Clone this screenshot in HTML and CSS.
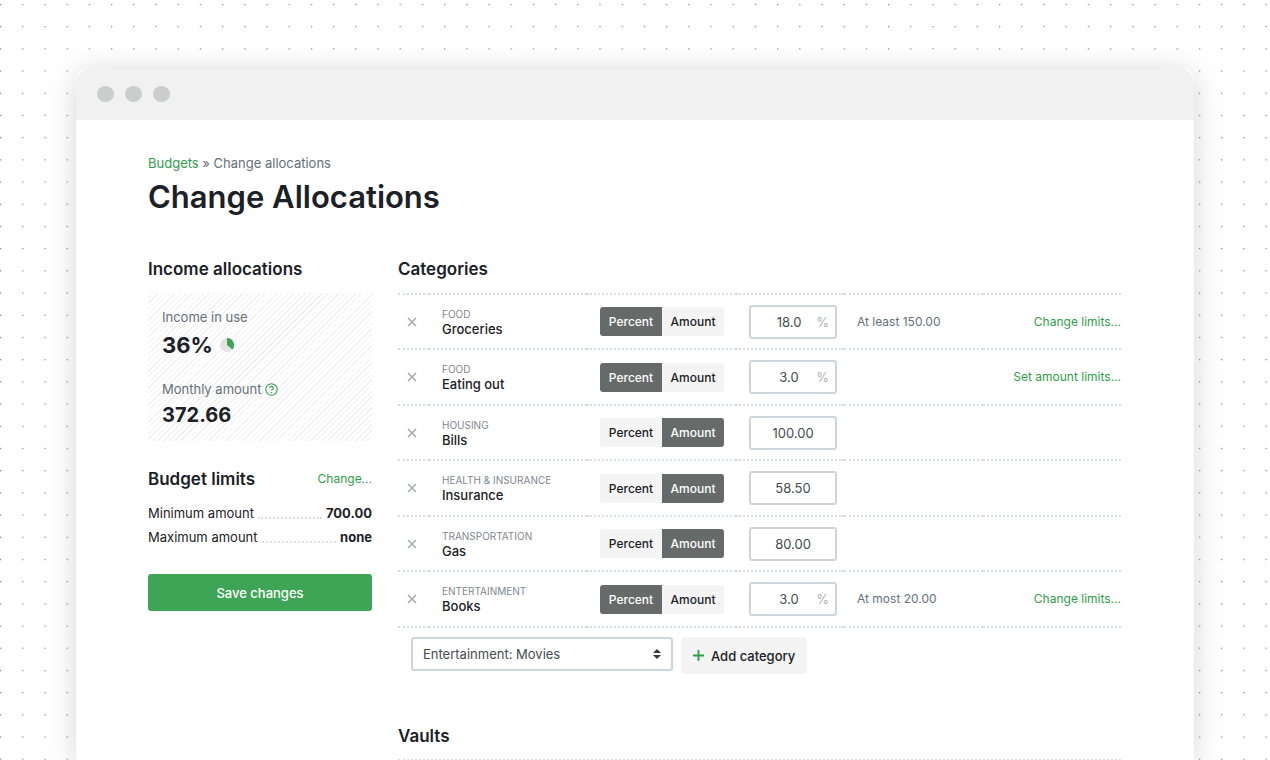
FILE: index.html
```
<!DOCTYPE html>
<html lang="en">

<head>
    <meta charset="UTF-8" />
    <title>Change Allocations</title>
    <link rel="stylesheet" href="styles.css">
</head>
<body>
    <div class="window">
        <div class="titlebar">
            <span class="dot"></span>
            <span class="dot"></span>
            <span class="dot"></span>
        </div>

        <main class="page">
            <nav class="breadcrumb"><a href="#">Budgets</a> » Change allocations</nav>
            <h1>Change Allocations</h1>

            <div class="columns">
                <!-- sidebar -->
                <aside class="sidebar">
                    <h2>Income allocations</h2>
                    <div class="summary">
                        <div class="label">Income in use</div>
                        <div class="value value-large">
                            36%
                            <svg class="pie" viewBox="0 0 28 28" aria-hidden="true">
                                <circle cx="14" cy="14" r="14" fill="#e2e4e4" />
                                <path d="M14 14V0A14 14 0 0 1 24.8 22.9Z" fill="#3fa556" />
                            </svg>
                        </div>
                        <div class="label label-second">
                            Monthly amount
                            <svg class="help" viewBox="0 0 24 24" aria-hidden="true">
                                <circle cx="12" cy="12" r="10.5" />
                                <path d="M8.6 9.4a3.4 3.4 0 0 1 6.8 .6c0 2.2-3.4 2.4-3.4 4.4M12 16.6v2.2" />
                            </svg>
                        </div>
                        <div class="value">372.66</div>
                    </div>

                    <div class="limits-head">
                        <h2>Budget limits</h2>
                        <a href="#">Change...</a>
                    </div>
                    <dl class="limits">
                        <div><dt>Minimum amount</dt><dd>700.00</dd></div>
                        <div><dt>Maximum amount</dt><dd>none</dd></div>
                    </dl>

                    <button class="save" type="button">Save changes</button>
                </aside>

                <!-- categories -->
                <section class="content">
                    <h2>Categories</h2>
                    <table class="allocations">
                        <colgroup>
                            <col class="col-remove">
                            <col class="col-name">
                            <col class="col-type">
                            <col class="col-value">
                            <col>
                            <col>
                        </colgroup>
                        <tbody>
                            <tr>
                                <td><button class="remove" type="button" aria-label="Remove Groceries"><svg viewBox="0 0 10 10"><path d="M1 1l8 8M9 1l-8 8" /></svg></button></td>
                                <td><div class="group">Food</div><div class="name">Groceries</div></td>
                                <td>
                                    <div class="toggle">
                                        <label><input type="radio" name="t1" checked><span>Percent</span></label>
                                        <label><input type="radio" name="t1"><span>Amount</span></label>
                                    </div>
                                </td>
                                <td><label class="field percent"><input type="text" value="18.0" aria-label="Groceries percent"><span>%</span></label></td>
                                <td class="note">At least 150.00</td>
                                <td class="action"><a href="#">Change limits...</a></td>
                            </tr>
                            <tr>
                                <td><button class="remove" type="button" aria-label="Remove Eating out"><svg viewBox="0 0 10 10"><path d="M1 1l8 8M9 1l-8 8" /></svg></button></td>
                                <td><div class="group">Food</div><div class="name">Eating out</div></td>
                                <td>
                                    <div class="toggle">
                                        <label><input type="radio" name="t2" checked><span>Percent</span></label>
                                        <label><input type="radio" name="t2"><span>Amount</span></label>
                                    </div>
                                </td>
                                <td><label class="field percent"><input type="text" value="3.0" aria-label="Eating out percent"><span>%</span></label></td>
                                <td class="note"></td>
                                <td class="action"><a href="#">Set amount limits...</a></td>
                            </tr>
                            <tr>
                                <td><button class="remove" type="button" aria-label="Remove Bills"><svg viewBox="0 0 10 10"><path d="M1 1l8 8M9 1l-8 8" /></svg></button></td>
                                <td><div class="group">Housing</div><div class="name">Bills</div></td>
                                <td>
                                    <div class="toggle">
                                        <label><input type="radio" name="t3"><span>Percent</span></label>
                                        <label><input type="radio" name="t3" checked><span>Amount</span></label>
                                    </div>
                                </td>
                                <td><label class="field"><input type="text" value="100.00" aria-label="Bills amount"></label></td>
                                <td class="note"></td>
                                <td class="action"></td>
                            </tr>
                            <tr>
                                <td><button class="remove" type="button" aria-label="Remove Insurance"><svg viewBox="0 0 10 10"><path d="M1 1l8 8M9 1l-8 8" /></svg></button></td>
                                <td><div class="group">Health &amp; Insurance</div><div class="name">Insurance</div></td>
                                <td>
                                    <div class="toggle">
                                        <label><input type="radio" name="t4"><span>Percent</span></label>
                                        <label><input type="radio" name="t4" checked><span>Amount</span></label>
                                    </div>
                                </td>
                                <td><label class="field"><input type="text" value="58.50" aria-label="Insurance amount"></label></td>
                                <td class="note"></td>
                                <td class="action"></td>
                            </tr>
                            <tr>
                                <td><button class="remove" type="button" aria-label="Remove Gas"><svg viewBox="0 0 10 10"><path d="M1 1l8 8M9 1l-8 8" /></svg></button></td>
                                <td><div class="group">Transportation</div><div class="name">Gas</div></td>
                                <td>
                                    <div class="toggle">
                                        <label><input type="radio" name="t5"><span>Percent</span></label>
                                        <label><input type="radio" name="t5" checked><span>Amount</span></label>
                                    </div>
                                </td>
                                <td><label class="field"><input type="text" value="80.00" aria-label="Gas amount"></label></td>
                                <td class="note"></td>
                                <td class="action"></td>
                            </tr>
                            <tr>
                                <td><button class="remove" type="button" aria-label="Remove Books"><svg viewBox="0 0 10 10"><path d="M1 1l8 8M9 1l-8 8" /></svg></button></td>
                                <td><div class="group">Entertainment</div><div class="name">Books</div></td>
                                <td>
                                    <div class="toggle">
                                        <label><input type="radio" name="t6" checked><span>Percent</span></label>
                                        <label><input type="radio" name="t6"><span>Amount</span></label>
                                    </div>
                                </td>
                                <td><label class="field percent"><input type="text" value="3.0" aria-label="Books percent"><span>%</span></label></td>
                                <td class="note">At most 20.00</td>
                                <td class="action"><a href="#">Change limits...</a></td>
                            </tr>
                        </tbody>
                    </table>

                    <div class="add-row">
                        <select class="category-select" aria-label="Category">
                            <option>Entertainment: Movies</option>
                        </select>
                        <button class="add" type="button">
                            <svg viewBox="0 0 12 12" aria-hidden="true"><path d="M6 0v12M0 6h12" /></svg>
                            Add category
                        </button>
                    </div>

                    <h2>Vaults</h2>
                    <div class="vaults"></div>
                </section>
            </div>
        </main>
    </div>
</body>

</html>
```
FILE: styles.css
```
*{
    box-sizing: border-box;
    margin: 0;
    padding: 0;
}

body{
    min-height: 100vh;
    padding: 68px 76px 0;
    font-family: Inter, "Liberation Sans", sans-serif;
    font-size: 13px;
    line-height: 20px;
    color: #1b2126;
    background-color: #fff;
    /* dotted paper, five dots per tile */
    background-image: url("data:image/svg+xml,%3Csvg xmlns='http://www.w3.org/2000/svg' width='111' height='111' viewBox='0 0 1110 1110'%3E%3Cpattern id='d' width='222' height='222' patternUnits='userSpaceOnUse'%3E%3Crect x='0' y='38' width='13' height='13' fill='%237592a5'/%3E%3C/pattern%3E%3Crect width='1110' height='1110' fill='url(%23d)'/%3E%3C/svg%3E");
}

a{
    color: #2f9e48;
    text-decoration: none;
}

h1{
    font-size: 31px;
    font-weight: 600;
    line-height: 40px;
}

h2{
    font-size: 17px;
    font-weight: 600;
    line-height: 24px;
}

input, select, button{
    font: inherit;
    color: inherit;
}

button{
    border: 0;
    cursor: pointer;
}

/* window frame */
.window{
    min-height: calc(100vh - 68px);
    background-color: #fff;
    border-radius: 12px 12px 0 0;
    box-shadow: 0 4px 30px rgba(0, 0, 0, 0.17);
}

.titlebar{
    display: flex;
    align-items: center;
    gap: 11px;
    height: 52px;
    padding: 0 21px;
    background-color: #f1f1f1;
    border-radius: 15px 15px 0 0;
}

.dot{
    width: 17px;
    height: 16px;
    border-radius: 50%;
    background-color: #cbcdcc;
}

.page{
    padding: 33px 73px 0 72px;
}

.breadcrumb{
    color: #65707a;
    margin-bottom: 4px;
}

.columns{
    display: grid;
    grid-template-columns: 224px 1fr;
    column-gap: 26px;
    margin-top: 40px;
}

/* sidebar */
.summary{
    margin-top: 12px;
    padding: 14px 14px 10px;
    background: repeating-linear-gradient(135deg, #fff 0, #fff 3px, #f1f1f1 3px, #f1f1f1 4px);
}

.label{
    color: #65707a;
}

.label-second{
    display: flex;
    align-items: center;
    gap: 4px;
    margin-top: 16px;
}

.value{
    font-size: 20px;
    font-weight: 700;
    line-height: 32px;
}

.value-large{
    display: flex;
    align-items: center;
    gap: 7px;
    font-size: 22px;
    line-height: 36px;
}

.pie{
    width: 14px;
    height: 14px;
}

.help{
    width: 13px;
    height: 13px;
    fill: none;
    stroke: #2f9e48;
    stroke-width: 2;
}

.limits-head{
    display: flex;
    justify-content: space-between;
    align-items: center;
    margin-top: 26px;
}

.limits-head a, .note, .action{
    font-size: 12px;
}

.limits{
    margin-top: 10px;
}

.limits div{
    display: flex;
    gap: 4px;
    line-height: 24px;
}

/* leader between name and value */
.limits dt{
    flex: 1;
    display: flex;
    gap: 4px;
}

.limits dt::after{
    content: "";
    flex: 1;
    height: 16px;
    border-bottom: 2px dotted #dde1e6;
}

.limits dd{
    font-weight: 700;
}

.save{
    display: block;
    width: 100%;
    height: 37px;
    margin-top: 25px;
    border-radius: 3px;
    background-color: #3fa556;
    color: #fff;
    font-weight: 500;
}

/* allocation table */
.allocations{
    width: 100%;
    margin-top: 12px;
    table-layout: fixed;
    border-collapse: collapse;
}

.allocations tr{
    height: 55px;
    border-top: 2px dotted #d7dde3;
    border-bottom: 2px dotted #d7dde3;
}

.allocations tr:nth-child(even){
    height: 56px;
}

.allocations td{
    padding: 0 0 0 13px;
    vertical-align: middle;
}

.allocations td:first-child{
    padding-left: 8px;
}

.col-remove{
    width: 31px;
}

.col-name{
    width: 158px;
}

.col-type{
    width: 149px;
}

.col-value{
    width: 108px;
}

.remove{
    display: block;
    padding: 1px;
    background: none;
}

.remove svg{
    display: block;
    width: 10px;
    height: 10px;
    fill: none;
    stroke: #a3a8ab;
    stroke-width: 1.5;
}

.group{
    font-size: 10px;
    line-height: 14px;
    color: #7d8790;
    text-transform: uppercase;
}

.name{
    font-weight: 500;
    line-height: 16px;
}

.toggle{
    display: inline-flex;
    vertical-align: middle;
    overflow: hidden;
    border-radius: 3px;
    background-color: #f4f4f4;
}

.toggle label{
    position: relative;
}

.toggle input{
    position: absolute;
    opacity: 0;
}

.toggle span{
    display: block;
    width: 62px;
    font-size: 12px;
    font-weight: 500;
    line-height: 29px;
    text-align: center;
}

.toggle input:checked + span{
    background-color: #666b69;
    color: #fff;
}

.field{
    position: relative;
    display: block;
    width: 88px;
}

.field input{
    display: block;
    width: 100%;
    height: 34px;
    border: 2px solid #cbd5de;
    border-radius: 3px;
    color: #444b52;
    background-color: #fff;
    text-align: center;
}

.percent input{
    padding-right: 8px;
}

/* unit shown inside the box */
.percent span{
    position: absolute;
    top: 7px;
    right: 8px;
    color: #a9b2ba;
}

.note{
    color: #65707a;
}

.action{
    text-align: right;
}

/* add form */
.add-row{
    display: flex;
    gap: 8px;
    margin: 9px 0 50px 13px;
}

.category-select{
    width: 262px;
    height: 34px;
    padding: 0 10px;
    border: 2px solid #cbd5de;
    border-radius: 3px;
    appearance: none;
    color: #444b52;
    background: #fff url("data:image/svg+xml,%3Csvg xmlns='http://www.w3.org/2000/svg' viewBox='0 0 8 10'%3E%3Cpath d='M4 0l4 4H0zM4 10L0 6h8z' fill='%23333a40'/%3E%3C/svg%3E") no-repeat right 10px center / 8px 10px;
}

.add{
    display: flex;
    align-items: center;
    gap: 7px;
    height: 37px;
    padding: 0 12px;
    border-radius: 3px;
    background-color: #f4f4f4;
    font-weight: 500;
}

.add svg{
    width: 11px;
    height: 11px;
    fill: none;
    stroke: #2f9e48;
    stroke-width: 2;
}

.vaults{
    margin-top: 11px;
    border-top: 2px dotted #d7dde3;
}
```
